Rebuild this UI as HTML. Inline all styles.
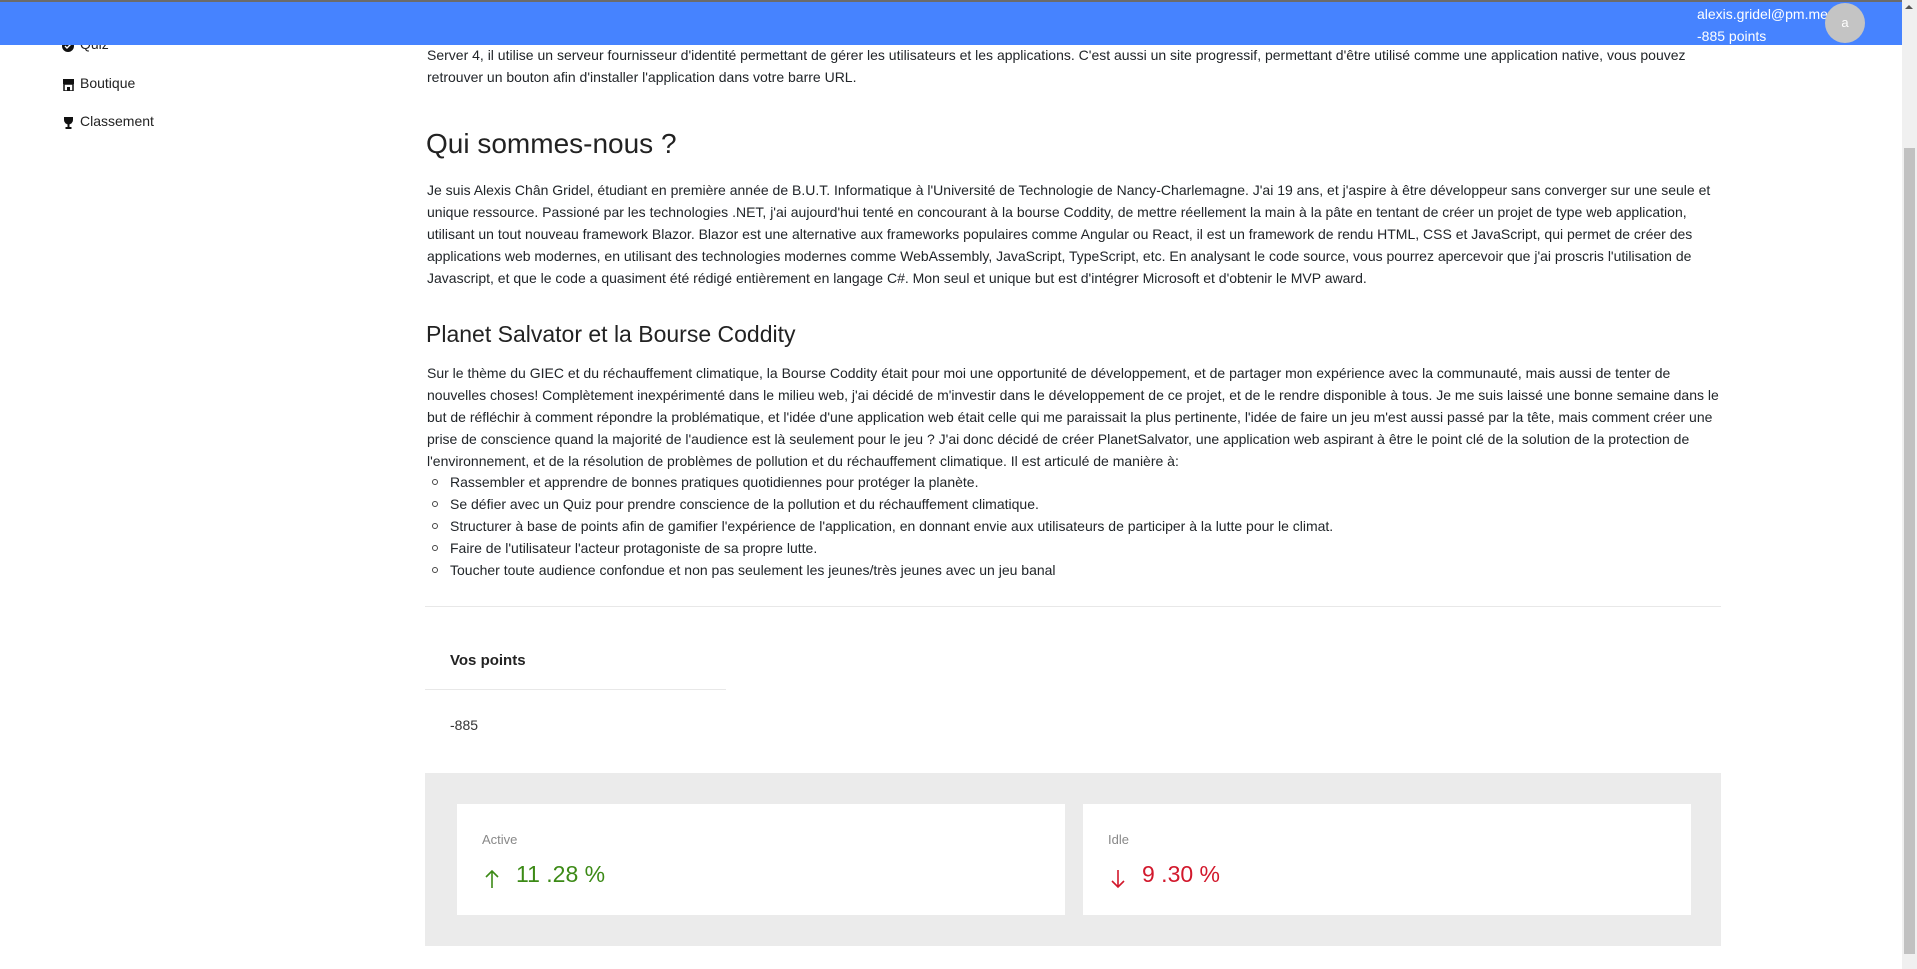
<!DOCTYPE html>
<html><head><meta charset="utf-8"><style>
*{margin:0;padding:0;box-sizing:border-box}
html,body{width:1917px;height:969px;overflow:hidden;background:#fff;font-family:"Liberation Sans",sans-serif;color:#212529}
.hdr{position:absolute;left:0;top:0;width:1902px;height:45px;background:#4683ff;border-top:2px solid #6b6b6b}
.sb{position:absolute;left:1902px;top:0;width:15px;height:969px;background:#f0f0f0}
.thumb{position:absolute;left:1904px;top:148px;width:11px;height:806px;background:#c1c1c1}
.t{position:absolute;white-space:nowrap}
.p{font-size:14px;line-height:22px;left:427px}
.nav{font-size:14px;left:80px;color:#222}
.li{font-size:14px;left:450px}
.dot{position:absolute;width:6px;height:6px;border:1.3px solid #444;border-radius:50%;left:432px}
</style></head><body>
<div class="t nav" style="top:36px">Quiz</div>
<svg style="position:absolute;left:62px;top:40px" width="12" height="12"><circle cx="6" cy="6" r="6" fill="#111"/><path d="M3 6l2 2 4-4" stroke="#fff" stroke-width="1.4" fill="none"/></svg>
<div class="t nav" style="top:75px">Boutique</div>
<svg style="position:absolute;left:63px;top:79px" width="11" height="12"><rect x="0" y="0" width="11" height="5" fill="#111"/><rect x="1" y="5" width="9" height="7" fill="none" stroke="#111" stroke-width="1.5"/><rect x="4" y="8" width="3" height="4" fill="#111"/></svg>
<div class="t nav" style="top:113px">Classement</div>
<svg style="position:absolute;left:63px;top:117px" width="11" height="13"><path d="M1 0h9v3a4.5 4.5 0 0 1-9 0z" fill="#111"/><rect x="4.5" y="7" width="2" height="3" fill="#111"/><rect x="2.5" y="10" width="6" height="2" fill="#111"/></svg>

<div class="hdr"></div>
<div class="t" style="left:1697px;top:3px;font-size:14px;line-height:22px;color:#fff">alexis.gridel@pm.me<br>-885 points</div>
<div style="position:absolute;left:1825px;top:3px;width:40px;height:40px;border-radius:50%;background:#c4c4c4;color:#fff;font-size:13px;text-align:center;line-height:40px">a</div>
<div class="sb"></div><div class="thumb"></div>
<div style="position:absolute;left:1905px;top:5px;width:0;height:0;border-left:4px solid transparent;border-right:4px solid transparent;border-bottom:4px solid #555"></div>

<div class="t p" style="top:44px">Server 4, il utilise un serveur fournisseur d'identité permettant de gérer les utilisateurs et les applications. C'est aussi un site progressif, permettant d'être utilisé comme une application native, vous pouvez<br>retrouver un bouton afin d'installer l'application dans votre barre URL.</div>

<div class="t" style="left:426px;top:127px;font-size:28px;line-height:34px;color:#222">Qui sommes-nous ?</div>

<div class="t p" style="top:179px">Je suis Alexis Chân Gridel, étudiant en première année de B.U.T. Informatique à l'Université de Technologie de Nancy-Charlemagne. J'ai 19 ans, et j'aspire à être développeur sans converger sur une seule et<br>unique ressource. Passioné par les technologies .NET, j'ai aujourd'hui tenté en concourant à la bourse Coddity, de mettre réellement la main à la pâte en tentant de créer un projet de type web application,<br>utilisant un tout nouveau framework Blazor. Blazor est une alternative aux frameworks populaires comme Angular ou React, il est un framework de rendu HTML, CSS et JavaScript, qui permet de créer des<br>applications web modernes, en utilisant des technologies modernes comme WebAssembly, JavaScript, TypeScript, etc. En analysant le code source, vous pourrez apercevoir que j'ai proscris l'utilisation de<br>Javascript, et que le code a quasiment été rédigé entièrement en langage C#. Mon seul et unique but est d'intégrer Microsoft et d'obtenir le MVP award.</div>

<div class="t" style="left:426px;top:320px;font-size:23px;line-height:28px;color:#222">Planet Salvator et la Bourse Coddity</div>

<div class="t p" style="top:362px">Sur le thème du GIEC et du réchauffement climatique, la Bourse Coddity était pour moi une opportunité de développement, et de partager mon expérience avec la communauté, mais aussi de tenter de<br>nouvelles choses! Complètement inexpérimenté dans le milieu web, j'ai décidé de m'investir dans le développement de ce projet, et de le rendre disponible à tous. Je me suis laissé une bonne semaine dans le<br>but de réfléchir à comment répondre la problématique, et l'idée d'une application web était celle qui me paraissait la plus pertinente, l'idée de faire un jeu m'est aussi passé par la tête, mais comment créer une<br>prise de conscience quand la majorité de l'audience est là seulement pour le jeu ? J'ai donc décidé de créer PlanetSalvator, une application web aspirant à être le point clé de la solution de la protection de<br>l'environnement, et de la résolution de problèmes de pollution et du réchauffement climatique. Il est articulé de manière à:</div>

<div class="dot" style="top:479px"></div><div class="t li" style="top:474px">Rassembler et apprendre de bonnes pratiques quotidiennes pour protéger la planète.</div>
<div class="dot" style="top:501px"></div><div class="t li" style="top:496px">Se défier avec un Quiz pour prendre conscience de la pollution et du réchauffement climatique.</div>
<div class="dot" style="top:523px"></div><div class="t li" style="top:518px">Structurer à base de points afin de gamifier l'expérience de l'application, en donnant envie aux utilisateurs de participer à la lutte pour le climat.</div>
<div class="dot" style="top:545px"></div><div class="t li" style="top:540px">Faire de l'utilisateur l'acteur protagoniste de sa propre lutte.</div>
<div class="dot" style="top:567px"></div><div class="t li" style="top:562px">Toucher toute audience confondue et non pas seulement les jeunes/très jeunes avec un jeu banal</div>

<div style="position:absolute;left:425px;top:606px;width:1296px;height:1px;background:#e8e8e8"></div>
<div class="t" style="left:450px;top:652px;font-size:15px;font-weight:bold;color:#222">Vos points</div>
<div style="position:absolute;left:425px;top:689px;width:301px;height:1px;background:#e8e8e8"></div>
<div class="t" style="left:450px;top:717px;font-size:14px;color:#333">-885</div>

<div style="position:absolute;left:425px;top:773px;width:1296px;height:173px;background:#ebebeb"></div>
<div style="position:absolute;left:457px;top:804px;width:608px;height:111px;background:#fff"></div>
<div style="position:absolute;left:1083px;top:804px;width:608px;height:111px;background:#fff"></div>
<div class="t" style="left:482px;top:832px;font-size:13px;color:#888">Active</div>
<svg style="position:absolute;left:484px;top:869px" width="16" height="20"><path d="M8 19V2M2 8l6-6 6 6" stroke="#3c8a16" stroke-width="1.6" fill="none"/></svg>
<div class="t" style="left:516px;top:861px;font-size:23px;color:#3c8a16">11 .28 %</div>
<div class="t" style="left:1108px;top:832px;font-size:13px;color:#888">Idle</div>
<svg style="position:absolute;left:1110px;top:869px" width="16" height="20"><path d="M8 1v17M2 12l6 6 6-6" stroke="#d2182c" stroke-width="1.6" fill="none"/></svg>
<div class="t" style="left:1142px;top:861px;font-size:23px;color:#d2182c">9 .30 %</div>
</body></html>
